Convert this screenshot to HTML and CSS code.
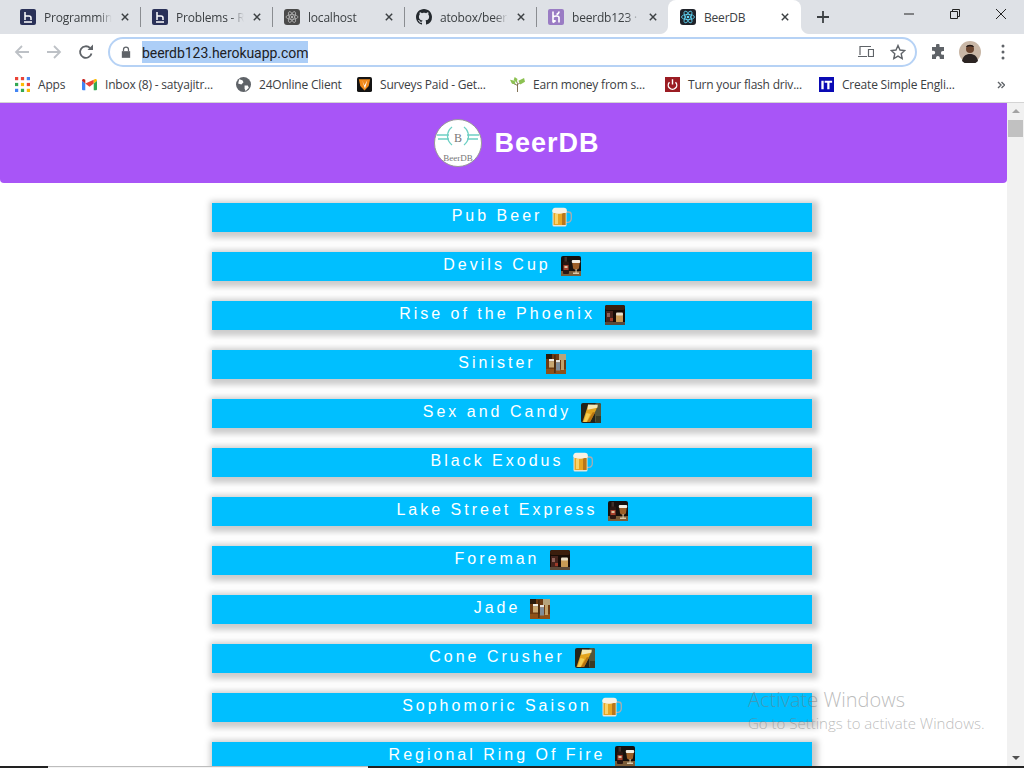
FILE: index.html
```html
<!DOCTYPE html>
<html lang="en">
  <head>
    <meta charset="UTF-8" />
    <meta name="viewport" content="width=device-width, initial-scale=1.0" />
    <title>BeerDB</title>
    <link rel="stylesheet" href="styles.css">
  </head>
  <body>
    <svg class="defs" width="0" height="0">
      <symbol id="mug" viewBox="0 0 20 20">
        <path d="M13 5h3.500a2.800 2.800 0 0 1 2.800 2.800v4a3.500 3.500 0 0 1-3.500 3.500h-3" fill="none" stroke="#a9adb0" stroke-width="1.300"/>
        <rect x="0.500" y="3" width="14" height="16.500" rx="1.500" fill="#e8e4d8"/>
        <rect x="1.500" y="6" width="12" height="12" fill="#e7a523"/>
        <rect x="3" y="7" width="3" height="10" fill="#f7d36b"/>
        <rect x="10" y="6" width="3.500" height="12" fill="#b8761b"/>
        <path d="M0.300 4.500a3 3 0 0 1 3-3.700h8.500a3 3 0 0 1 3 3.200c0 2.200-1.800 2.400-2.800 1.800-3 1.500-9.500 1.700-11.700-1.300z" fill="#f7f1e3"/>
      </symbol>
      <symbol id="devils" viewBox="0 0 20 20">
        <rect width="20" height="20" rx="2" fill="#15100d"/>
        <rect y="15" width="20" height="5" fill="#7a5c38"/>
        <rect x="3.500" y="1" width="2.500" height="5" fill="#40302a"/>
        <rect x="2" y="5.500" width="6" height="12.500" rx="1" fill="#2b1712"/>
        <rect x="2.500" y="9" width="5" height="5" fill="#a8402c"/>
        <rect x="3.500" y="10" width="3" height="2" fill="#dcc3a0"/>
        <path d="M11 5h8l-.8 5.500a3.200 3.200 0 0 1-6.400 0z" fill="#9c5f28"/>
        <rect x="10.800" y="4" width="8.400" height="3" rx="1" fill="#f2ede2"/>
        <rect x="14.500" y="13" width="1.200" height="4" fill="#cbb89a"/>
        <rect x="12" y="16.500" width="6" height="1.500" fill="#d8c8aa"/>
      </symbol>
      <symbol id="phoenix" viewBox="0 0 20 20">
        <rect width="20" height="20" rx="2" fill="#170c06"/>
        <rect width="20" height="5" rx="2" fill="#3b1e0d"/>
        <rect x="1" y="6" width="7" height="11" fill="#47241c"/>
        <rect x="2" y="8" width="3" height="4" fill="#8e5f56"/>
        <rect x="5" y="13" width="3" height="3" fill="#a03a28"/>
        <rect x="11" y="9" width="7" height="8.500" rx="1" fill="#c89b55"/>
        <rect x="11" y="7.500" width="7" height="3" rx="1" fill="#e8dfca"/>
        <rect y="17" width="20" height="3" fill="#5a4a3a"/>
      </symbol>
      <symbol id="sinister" viewBox="0 0 20 20">
        <rect width="20" height="20" rx="2" fill="#6f3c12"/>
        <rect y="15" width="20" height="5" fill="#8e5119"/>
        <rect width="6" height="5" fill="#2a1a0c"/>
        <rect x="13" width="7" height="6" fill="#b7a47c"/>
        <rect x="3" y="5" width="5" height="2.500" fill="#f0ece2"/>
        <rect x="3" y="7.500" width="5" height="6" fill="#c9a871"/>
        <rect x="10" y="6" width="4" height="2.500" fill="#e8e6e0"/>
        <rect x="10" y="8.500" width="4" height="8" fill="#7f8d9a"/>
        <rect x="15" y="6" width="3" height="10" fill="#c2a26a"/>
        <rect x="8.300" y="1" width="1.200" height="18" fill="#3a2410"/>
      </symbol>
      <symbol id="candy" viewBox="0 0 20 20">
        <rect width="20" height="20" rx="2" fill="#23241a"/>
        <rect x="14" width="6" height="20" rx="2" fill="#55563a"/>
        <rect x="15" y="13" width="5" height="7" fill="#3b3b26"/>
        <path d="M7 2.500l9.500.500-1.500 4-6 12H1.500z" fill="#e3a41e"/>
        <path d="M7 1.500l9.800.200-.5 3-9.800 2z" fill="#f4e7b4"/>
        <path d="M5.500 10l4 1-4 8H2.500z" fill="#f5cc50"/>
        <path d="M12 9l2 1-5 9-3 0z" fill="#b87512"/>
      </symbol>
    </svg>

    <div class="window">
      <div class="tabstrip">
        <div class="tab">
          <svg class="favicon" viewBox="0 0 16 16"><rect width="16" height="16" rx="2" fill="#2a3158"/><path d="M5 3v8M5 7h4a2 2 0 0 1 2 2v2M4 13h8" fill="none" stroke="#fff" stroke-width="1.500"/></svg>
          <span class="tab-title">Programming</span>
          <svg class="tab-close" viewBox="0 0 10 10"><path d="M1 1l8 8M9 1l-8 8"/></svg>
        </div>
        <div class="tab">
          <svg class="favicon" viewBox="0 0 16 16"><rect width="16" height="16" rx="2" fill="#2a3158"/><path d="M5 3v8M5 7h4a2 2 0 0 1 2 2v2M4 13h8" fill="none" stroke="#fff" stroke-width="1.500"/></svg>
          <span class="tab-title">Problems - Re</span>
          <svg class="tab-close" viewBox="0 0 10 10"><path d="M1 1l8 8M9 1l-8 8"/></svg>
        </div>
        <div class="tab">
          <svg class="favicon" viewBox="0 0 16 16"><rect width="16" height="16" rx="3" fill="#4a4a4a"/><g fill="none" stroke="#b5b5b5" stroke-width=".8"><ellipse cx="8" cy="8" rx="6" ry="2.400"/><ellipse cx="8" cy="8" rx="6" ry="2.400" transform="rotate(60 8 8)"/><ellipse cx="8" cy="8" rx="6" ry="2.400" transform="rotate(120 8 8)"/></g><circle cx="8" cy="8" r="1.200" fill="#b5b5b5"/></svg>
          <span class="tab-title">localhost</span>
          <svg class="tab-close" viewBox="0 0 10 10"><path d="M1 1l8 8M9 1l-8 8"/></svg>
        </div>
        <div class="tab">
          <svg class="favicon" viewBox="0 0 16 16"><path fill="#24292e" d="M8 0C3.580 0 0 3.580 0 8c0 3.540 2.290 6.530 5.470 7.590.4.070.55-.17.55-.38 0-.19-.01-.82-.01-1.490-2.010.37-2.530-.49-2.690-.94-.09-.23-.48-.94-.82-1.130-.28-.15-.68-.52-.01-.53.630-.01 1.080.58 1.230.82.720 1.210 1.870.87 2.330.66.070-.52.280-.87.510-1.070-1.780-.2-3.640-.89-3.640-3.950 0-.87.310-1.590.82-2.150-.08-.2-.36-1.020.08-2.120 0 0 .67-.21 2.200.82.640-.18 1.320-.27 2-.27s1.360.09 2 .27c1.530-1.040 2.200-.82 2.200-.82.440 1.100.160 1.920.08 2.120.51.560.82 1.270.82 2.150 0 3.070-1.870 3.750-3.650 3.950.29.25.54.73.54 1.480 0 1.070-.01 1.930-.01 2.200 0 .21.150.46.550.38A8.010 8.010 0 0 0 16 8c0-4.420-3.580-8-8-8z"/></svg>
          <span class="tab-title">atobox/beerdb</span>
          <svg class="tab-close" viewBox="0 0 10 10"><path d="M1 1l8 8M9 1l-8 8"/></svg>
        </div>
        <div class="tab">
          <svg class="favicon" viewBox="0 0 16 16"><rect width="16" height="16" rx="2" fill="#9a7cc4"/><path d="M5 2.500v11M5 8c2-1.500 6-1.500 6 .500v5M11 2.500c0 1.500-1 2.500-2.500 3M5 13.500l2-1.500-2-1.500" fill="none" stroke="#fff" stroke-width="1.600"/></svg>
          <span class="tab-title">beerdb123 · Groups</span>
          <svg class="tab-close" viewBox="0 0 10 10"><path d="M1 1l8 8M9 1l-8 8"/></svg>
        </div>
        <div class="tab tab-active">
          <svg class="favicon" viewBox="0 0 16 16"><rect width="16" height="16" rx="3" fill="#20232a"/><g fill="none" stroke="#61dafb" stroke-width=".8"><ellipse cx="8" cy="8" rx="6.500" ry="2.600"/><ellipse cx="8" cy="8" rx="6.500" ry="2.600" transform="rotate(60 8 8)"/><ellipse cx="8" cy="8" rx="6.500" ry="2.600" transform="rotate(120 8 8)"/></g><circle cx="8" cy="8" r="1.300" fill="#61dafb"/></svg>
          <span class="tab-title">BeerDB</span>
          <svg class="tab-close" viewBox="0 0 10 10"><path d="M1 1l8 8M9 1l-8 8"/></svg>
        </div>
        <svg class="new-tab" viewBox="0 0 12 12"><path d="M6 0v12M0 6h12"/></svg>
        <div class="win-controls">
          <svg viewBox="0 0 10 10"><path d="M0 5h10"/></svg>
          <svg viewBox="0 0 10 10"><path d="M0.500 2.500h7v7h-7zM2.500 2.500v-2h7v7h-2"/></svg>
          <svg viewBox="0 0 10 10"><path d="M0 0l10 10M10 0l-10 10"/></svg>
        </div>
      </div>

      <div class="toolbar">
        <svg class="nav-btn nav-off" viewBox="0 0 16 16"><path d="M15 8H2M8 2L2 8l6 6"/></svg>
        <svg class="nav-btn nav-off" viewBox="0 0 16 16"><path d="M1 8h13M8 2l6 6-6 6"/></svg>
        <svg class="nav-btn" viewBox="0 0 16 16"><path d="M13.500 9.500A5.800 5.800 0 1 1 12 4"/><path class="solid" d="M9.500 6H15V.500z"/></svg>
        <div class="omnibox">
          <svg class="lock" viewBox="0 0 12 14"><path class="solid" d="M1 6h10v8H1z"/><path d="M3 6V4a3 3 0 0 1 6 0v2" fill="none" stroke="#5f6368" stroke-width="1.500"/></svg>
          <span class="url">beerdb123.herokuapp.com</span>
          <svg class="omni-icon" viewBox="0 0 16 14"><path d="M2 10V1.500h11M0 11.500h9M10.500 4.500h5v7h-5z" fill="none" stroke="#5f6368" stroke-width="1.200"/></svg>
          <svg class="omni-icon star" viewBox="0 0 16 16"><path d="M8 1.500l2 4.500 4.800.500-3.600 3.200 1 4.800L8 12.100l-4.200 2.400 1-4.800L1.200 6.500 6 6z" fill="none" stroke="#5f6368" stroke-width="1.400"/></svg>
        </div>
        <svg class="puzzle" viewBox="0 0 16 16"><path fill="#5f6368" d="M6 1.500a1.800 1.800 0 0 1 3.600 0V3H14v4h-1.200a1.900 1.900 0 0 0 0 3.800H14V15H9.800v-1.200a1.900 1.900 0 0 0-3.800 0V15H2v-4.500h1.300a1.900 1.900 0 0 0 0-3.800H2V3h4z"/></svg>
        <svg class="avatar" viewBox="0 0 22 22"><circle cx="11" cy="11" r="11" fill="#c9b7a6"/><circle cx="11" cy="8" r="4" fill="#6b4630"/><path d="M7 6c1-3 7-3 8 0l-1 0c-2-1-4-1-6 0z" fill="#1d1512"/><path d="M3 20c1-6 5-7 8-7s7 1 8 7a11 11 0 0 1-16 0z" fill="#2b2422"/></svg>
        <svg class="menu-dots" viewBox="0 0 4 16"><circle cx="2" cy="2" r="1.500"/><circle cx="2" cy="8" r="1.500"/><circle cx="2" cy="14" r="1.500"/></svg>
      </div>

      <div class="bookmarks">
        <div class="bookmark">
          <svg class="mark" viewBox="0 0 14 14"><g fill="#ea4335"><rect width="3" height="3"/><rect x="5.500" width="3" height="3"/></g><rect x="11" width="3" height="3" fill="#4285f4"/><rect y="5.500" width="3" height="3" fill="#34a853"/><rect x="5.500" y="5.500" width="3" height="3" fill="#fbbc04"/><rect x="11" y="5.500" width="3" height="3" fill="#ea4335"/><rect y="11" width="3" height="3" fill="#4285f4"/><rect x="5.500" y="11" width="3" height="3" fill="#34a853"/><rect x="11" y="11" width="3" height="3" fill="#fbbc04"/></svg>
          <span>Apps</span>
        </div>
        <div class="bookmark">
          <svg class="mark" viewBox="0 0 16 12"><path d="M0 2v9a1 1 0 0 0 1 1h2.500V5z" fill="#4285f4"/><path d="M16 2v9a1 1 0 0 1-1 1h-2.500V5z" fill="#34a853"/><path d="M3.500 5L8 8.300 12.500 5V1z" fill="#ea4335" /><path d="M0 2c0-2 2-2.500 3.500-1V5z" fill="#c5221f"/><path d="M16 2c0-2-2-2.500-3.500-1V5z" fill="#fbbc04"/></svg>
          <span>Inbox (8) - satyajitr...</span>
        </div>
        <div class="bookmark">
          <svg class="mark" viewBox="0 0 14 14"><circle cx="7" cy="7" r="7" fill="#5f6368"/><path d="M3 2l3 1 1 2-2 2-3-1zM8 8l3 0 1 2-3 3-1-2z" fill="#fff"/></svg>
          <span>24Online Client</span>
        </div>
        <div class="bookmark">
          <svg class="mark" viewBox="0 0 16 16"><rect width="16" height="16" rx="2" fill="#141414"/><path d="M2 2.500h12l-1.500 7L8 14.500 3.500 9.500z" fill="#f0891a"/><path d="M5.500 3.500L8 9l3-5.500-2.500 9z" fill="#fff"/></svg>
          <span>Surveys Paid - Get...</span>
        </div>
        <div class="bookmark">
          <svg class="mark" viewBox="0 0 16 16"><path d="M8 16V7M8 9L2 6M8 8l6-4M8 7L6 2" stroke="#7a6a4a" fill="none"/><path d="M0 3l5 1 1 4-4-1zM9 4l6-3 1 4-5 3zM5 0l3 2-1 4-3-3z" fill="#8cc152"/></svg>
          <span>Earn money from s...</span>
        </div>
        <div class="bookmark">
          <svg class="mark" viewBox="0 0 16 16"><rect width="16" height="16" fill="#9b1c23"/><path d="M4.800 5.500a4.500 4.500 0 1 0 6.400 0M8 2.500V8" fill="none" stroke="#fff" stroke-width="1.500"/></svg>
          <span>Turn your flash driv...</span>
        </div>
        <div class="bookmark">
          <svg class="mark" viewBox="0 0 16 16"><rect width="16" height="16" fill="#0a0ab4"/><path d="M2.500 4h2.500v9H2.500zM6 4h8v2.200h-2.800V13H8.800V6.200H6z" fill="#fff"/></svg>
          <span>Create Simple Engli...</span>
        </div>
        <svg class="more" viewBox="0 0 8 8"><path d="M1 1l3 3-3 3M4.500 1l3 3-3 3"/></svg>
      </div>

      <div class="viewport">
        <main class="page">
          <header class="brand">
            <svg class="logo" viewBox="0 0 48 48">
              <circle cx="24" cy="24" r="23.500" fill="#fff" stroke="#999" stroke-width="1"/>
              <path d="M18 8c-6 5-6 13 0 18M30 8c6 5 6 13 0 18" fill="none" stroke="#6dd0c4" stroke-width="1.300"/>
              <path d="M3 16h12M4 20h11M45 16H33M44 20H33" stroke="#6dd0c4" stroke-width="1.300"/>
              <text class="logo-b" x="24" y="23" text-anchor="middle">B</text>
              <text class="logo-name" x="24" y="42" text-anchor="middle">BeerDB</text>
            </svg>
            <h1>BeerDB</h1>
          </header>
          <section class="beer-list">
            <div class="beer"><span>Pub Beer</span><svg class="beer-pic"><use href="#mug"/></svg></div>
            <div class="beer"><span>Devils Cup</span><svg class="beer-pic"><use href="#devils"/></svg></div>
            <div class="beer"><span>Rise of the Phoenix</span><svg class="beer-pic"><use href="#phoenix"/></svg></div>
            <div class="beer"><span>Sinister</span><svg class="beer-pic"><use href="#sinister"/></svg></div>
            <div class="beer"><span>Sex and Candy</span><svg class="beer-pic"><use href="#candy"/></svg></div>
            <div class="beer"><span>Black Exodus</span><svg class="beer-pic"><use href="#mug"/></svg></div>
            <div class="beer"><span>Lake Street Express</span><svg class="beer-pic"><use href="#devils"/></svg></div>
            <div class="beer"><span>Foreman</span><svg class="beer-pic"><use href="#phoenix"/></svg></div>
            <div class="beer"><span>Jade</span><svg class="beer-pic"><use href="#sinister"/></svg></div>
            <div class="beer"><span>Cone Crusher</span><svg class="beer-pic"><use href="#candy"/></svg></div>
            <div class="beer"><span>Sophomoric Saison</span><svg class="beer-pic"><use href="#mug"/></svg></div>
            <div class="beer"><span>Regional Ring Of Fire</span><svg class="beer-pic"><use href="#devils"/></svg></div>
          </section>
        </main>
        <div class="scrollbar">
          <span class="arrow-up"></span>
          <span class="thumb"></span>
          <span class="arrow-down"></span>
        </div>
        <div class="activate">
          <p class="activate-title">Activate Windows</p>
          <p class="activate-text">Go to Settings to activate Windows.</p>
        </div>
      </div>
      <div class="taskbar">
        <div class="task-search"></div>
      </div>
    </div>
  </body>
</html>
```

FILE: styles.css
```css
/* Ventana del navegador */
html,
body {
  margin: 0;
  height: 100%;
  overflow: hidden;
}

body {
  font-family: "Open Sans", "Noto Sans", sans-serif;
  color: #3c4043;
  background-color: #fff;
}

.defs {
  display: block;
  height: 0;
}

.window {
  display: flex;
  flex-direction: column;
  height: 768px;
}

/* Pestañas */
.tabstrip {
  display: flex;
  align-items: center;
  height: 34px;
  padding-left: 8px;
  background-color: #dee1e6;
}

.tab {
  display: flex;
  align-items: center;
  box-sizing: border-box;
  width: 132px;
  height: 34px;
  padding: 0 11px 0 12px;
  position: relative;
}

.tab::after {
  content: "";
  position: absolute;
  right: -1px;
  top: 7px;
  height: 20px;
  width: 1px;
  background-color: #8a8d91;
}

.tab:nth-child(5)::after {
  display: none;
}

.tab-active {
  width: 133px;
  padding-right: 12px;
  background-color: #fff;
  border-radius: 8px 8px 0 0;
}

/* esquinas curvas de la pestaña activa */
.tab-active::before,
.tab-active::after {
  content: "";
  position: absolute;
  top: auto;
  bottom: 0;
  width: 8px;
  height: 8px;
}

.tab-active::before {
  left: -8px;
  background: radial-gradient(circle at 0 0, #dee1e6 7.5px, #fff 8.5px);
}

.tab-active::after {
  right: -8px;
  background: radial-gradient(circle at 100% 0, #dee1e6 7.5px, #fff 8.5px);
}

.favicon {
  width: 16px;
  height: 16px;
  flex: none;
  margin-right: 8px;
}

.tab-title {
  flex: 1;
  min-width: 0;
  font-size: 12px;
  letter-spacing: -0.2px;
  white-space: nowrap;
  overflow: hidden;
  -webkit-mask-image: linear-gradient(to right, #000 80%, transparent);
  mask-image: linear-gradient(to right, #000 80%, transparent);
}

.tab-active .tab-title {
  -webkit-mask-image: none;
  mask-image: none;
}

.tab-close {
  width: 8px;
  height: 8px;
  flex: none;
  margin-left: 9px;
  fill: none;
  stroke: #3c4043;
  stroke-width: 1.800;
}

.new-tab {
  width: 12px;
  height: 12px;
  margin-left: 16px;
  fill: none;
  stroke: #3c4043;
  stroke-width: 1.800;
}

.win-controls {
  display: flex;
  align-items: center;
  gap: 36px;
  margin-left: auto;
  padding-right: 18px;
  height: 28px;
  align-self: flex-start;
}

.win-controls svg {
  width: 10px;
  height: 10px;
  fill: none;
  stroke: #222;
  stroke-width: 1;
}

/* Barra de direcciones */
.toolbar {
  display: flex;
  align-items: center;
  height: 35px;
  padding-left: 14px;
}

.nav-btn {
  width: 16px;
  height: 16px;
  margin-right: 16px;
  fill: none;
  stroke: #5f6368;
  stroke-width: 1.800;
}

.nav-off {
  stroke: #bdc1c6;
}

.solid {
  fill: #5f6368;
  stroke: none;
}

.omnibox {
  display: flex;
  align-items: center;
  box-sizing: border-box;
  width: 809px;
  height: 30px;
  margin-left: -2px;
  padding-left: 11px;
  border: 2px solid #b6d2f5;
  border-radius: 15px;
}

.lock {
  width: 10px;
  height: 12px;
  margin-right: 11px;
}

.url {
  font-family: "Roboto", sans-serif;
  font-size: 14px;
  line-height: 20px;
  padding-top: 2px;
  letter-spacing: -0.05px;
  color: #202124;
  background-color: #accef7;
}

.omni-icon {
  width: 16px;
  height: 14px;
  margin-left: auto;
}

.star {
  width: 16px;
  height: 16px;
  margin-left: 16px;
  margin-right: 9px;
}

.puzzle {
  width: 16px;
  height: 16px;
  margin-left: 13px;
}

.avatar {
  width: 22px;
  height: 22px;
  margin-left: 13px;
}

.menu-dots {
  width: 4px;
  height: 16px;
  margin-left: 20px;
  fill: #5f6368;
}

/* Marcadores */
.bookmarks {
  display: grid;
  grid-template-columns: 67px 154px 121px 153px 155px 154px 1fr 8px;
  align-items: center;
  box-sizing: border-box;
  height: 33px;
  padding: 0 19px 2px 15px;
}

.bookmark {
  display: flex;
  align-items: center;
  gap: 8px;
  font-size: 12px;
  letter-spacing: -0.2px;
  white-space: nowrap;
}

.mark {
  width: 15px;
  height: 15px;
  flex: none;
}

.more {
  width: 8px;
  height: 8px;
  fill: none;
  stroke: #5f6368;
  stroke-width: 1.400;
}

/* Pagina */
.viewport {
  flex: 1;
  min-height: 0;
  display: flex;
  overflow: hidden;
  position: relative;
  border-top: 1px solid #d4d4d4;
}

.page {
  flex: 1;
  min-width: 0;
}

.brand {
  display: flex;
  align-items: center;
  justify-content: center;
  gap: 12px;
  height: 80px;
  padding-left: 27px;
  background-color: #a855f7;
  border-radius: 0 0 4px 4px;
}

.logo {
  width: 48px;
  height: 48px;
}

.logo-b {
  font-family: "Liberation Serif", serif;
  font-size: 12px;
  fill: #777;
}

.logo-name {
  font-family: "Liberation Serif", serif;
  font-size: 9px;
  fill: #777;
}

.brand h1 {
  margin: 0;
  font-family: "Liberation Sans", Arial, sans-serif;
  font-size: 27px;
  font-weight: 700;
  letter-spacing: 1px;
  color: #fff;
}

.beer-list {
  display: flex;
  flex-direction: column;
  gap: 20px;
  width: 600px;
  margin-left: 212px;
  padding-top: 20px;
}

.beer {
  display: flex;
  align-items: center;
  justify-content: center;
  gap: 10px;
  flex: none;
  box-sizing: border-box;
  height: 29px;
  padding-bottom: 1px;
  background-color: #00bfff;
  box-shadow: 2px 2px 6px 4px #ccc;
  font-family: "Liberation Sans", Arial, sans-serif;
  font-size: 16px;
  letter-spacing: 3px;
  color: #fff;
}

.beer span {
  position: relative;
  top: -1px;
}

.beer-pic {
  width: 20px;
  height: 20px;
  flex: none;
  filter: blur(0.3px);
}

.scrollbar {
  display: flex;
  flex-direction: column;
  align-items: center;
  flex: none;
  width: 17px;
  background-color: #f1f1f1;
  position: relative;
}

.arrow-up {
  margin-top: 6px;
  border: 4px solid transparent;
  border-top: 0;
  border-bottom: 4px solid #a3a3a3;
}

.thumb {
  width: 15px;
  height: 17px;
  margin-top: 7px;
  background-color: #c1c1c1;
}

.arrow-down {
  margin-top: auto;
  margin-bottom: 6px;
  border: 4px solid transparent;
  border-bottom: 0;
  border-top: 4px solid #505050;
}

/* Marca de agua de Windows */
.activate {
  position: absolute;
  left: 748px;
  top: 584px;
  color: rgba(120, 120, 120, 0.5);
  pointer-events: none;
}

.activate p {
  margin: 0;
}

.activate-title {
  font-size: 20px;
  font-weight: 300;
  line-height: 26px;
}

.activate-text {
  font-size: 15px;
  font-weight: 300;
  line-height: 20px;
}

.taskbar {
  height: 2px;
  flex: none;
  padding-left: 48px;
  background-color: #222;
  position: relative;
}

.task-search {
  box-sizing: border-box;
  width: 320px;
  height: 2px;
  background-color: #f4f4f4;
  border-top: 1px solid #bdbdbd;
}
```
